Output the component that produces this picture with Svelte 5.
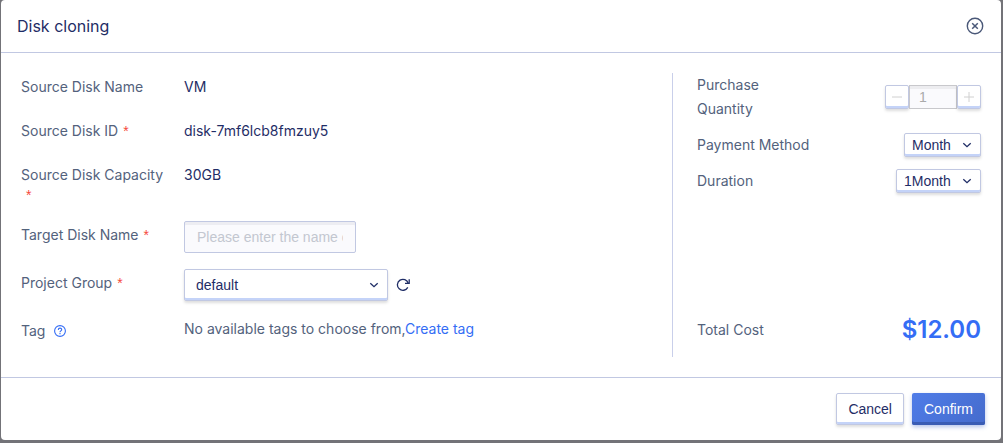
<script>
  let name = $state('');
  let group = $state('default');
  let method = $state('Month');
  let duration = $state('1Month');
  let quantity = $state(1);
</script>

{#snippet chevron()}
  <svg class="chevron" viewBox="0 0 10 10" width="10" height="10" aria-hidden="true">
    <path d="M1.3 3.2 5 6.7 8.7 3.2" fill="none" stroke="currentColor" stroke-width="1.3" />
  </svg>
{/snippet}

<div class="backdrop">
  <section class="dialog" role="dialog" aria-labelledby="title">
    <header>
      <h1 id="title">Disk cloning</h1>
      <button class="icon" aria-label="Close">
        <svg viewBox="0 0 18 18" width="18" height="18" fill="none" stroke="currentColor">
          <circle cx="9" cy="9" r="7.7" stroke-width="1.4" />
          <path d="m6.2 6.2 5.6 5.6M11.8 6.2l-5.6 5.6" stroke-width="1.5" />
        </svg>
      </button>
    </header>

    <div class="content">
      <div class="form">
        <div class="row">
          <span class="label">Source Disk Name</span>
          <span class="value">VM</span>
        </div>
        <div class="row">
          <span class="label">Source Disk ID<i>*</i></span>
          <span class="value">disk-7mf6lcb8fmzuy5</span>
        </div>
        <div class="row">
          <span class="label">Source Disk Capacity<i>*</i></span>
          <span class="value">30GB</span>
        </div>
        <div class="row">
          <label class="label" for="name">Target Disk Name<i>*</i></label>
          <input id="name" class="name" placeholder="Please enter the name of the disk" bind:value={name} />
        </div>
        <div class="row">
          <label class="label" for="group">Project Group<i>*</i></label>
          <div class="group">
            <span class="select wide">
              <select id="group" bind:value={group}><option>default</option></select>
              {@render chevron()}
            </span>
            <button class="icon" aria-label="Refresh">
              <svg viewBox="0 0 14 14" width="14" height="14" fill="none" stroke="currentColor" stroke-width="1.3">
                <path d="M11.8 9.4A5.5 5.5 0 1 1 12.2 5.2" />
                <path d="M13.2 1.2V5.4H9" />
              </svg>
            </button>
          </div>
        </div>
        <div class="row">
          <span class="label tag">
            Tag
            <svg viewBox="0 0 12 12" width="12" height="12" fill="none" stroke="currentColor" aria-hidden="true">
              <circle cx="6" cy="6" r="5.4" stroke-width="1.1" />
              <path d="M4.3 4.9C4.3 2.6 7.7 2.6 7.7 4.7 7.7 5.9 6 5.9 6 7.2M6 8v1.2" stroke-width="1.1" />
            </svg>
          </span>
          <span class="note">No available tags to choose from,<a href="#create">Create tag</a></span>
        </div>
      </div>

      <div class="order">
        <div class="item">
          <label class="caption" for="quantity">Purchase Quantity</label>
          <div class="stepper">
            <button disabled aria-label="Decrease">
              <svg viewBox="0 0 10 10" width="10" height="10"><path d="M0 5h10" stroke="currentColor" /></svg>
            </button>
            <input id="quantity" disabled value={quantity} />
            <button disabled aria-label="Increase">
              <svg viewBox="0 0 10 10" width="10" height="10"><path d="M0 5h10M5 0v10" stroke="currentColor" /></svg>
            </button>
          </div>
        </div>
        <div class="item">
          <label for="method">Payment Method</label>
          <span class="select">
            <select id="method" bind:value={method}><option>Month</option></select>
            {@render chevron()}
          </span>
        </div>
        <div class="item">
          <label for="duration">Duration</label>
          <span class="select">
            <select id="duration" bind:value={duration}><option>1Month</option></select>
            {@render chevron()}
          </span>
        </div>
        <div class="item total">
          <span>Total Cost</span>
          <strong>$12.00</strong>
        </div>
      </div>
    </div>

    <footer>
      <button class="button">Cancel</button>
      <button class="button primary">Confirm</button>
    </footer>
  </section>
</div>

<style>
  :global(body) {
    margin: 0;
    background: #737378;
  }
  .backdrop {
    padding: 0 2px 3px 1px;
    font: 14px/24px Inter, sans-serif;
    color: #53627c;
  }
  .dialog {
    background: #fff;
    border-radius: 4px;
  }
  header {
    display: flex;
    align-items: center;
    justify-content: space-between;
    height: 52px;
    padding: 0 17px 0 16px;
    border-bottom: 1px solid #c1c8e2;
  }
  h1 {
    margin: 0;
    font-size: 16px;
    font-weight: 400;
    color: #1f2d66;
  }
  button,
  input,
  select {
    box-sizing: border-box;
    margin: 0;
    font: 14px/20px "Liberation Sans", sans-serif;
    color: #1f2d66;
  }
  .icon {
    display: flex;
    padding: 0;
    border: 0;
    background: none;
    color: #1f2d66;
  }
  header .icon {
    color: #4a5878;
  }
  .content {
    display: flex;
    padding: 20px;
  }
  .form {
    flex: 1;
    min-width: 0;
    display: flex;
    flex-direction: column;
    gap: 16px;
    padding-bottom: 16px;
  }
  .row {
    display: flex;
    align-items: flex-start;
  }
  .label {
    box-sizing: border-box;
    width: 163px;
    flex: none;
    padding: 4px 20px 0 0;
    line-height: 20px;
  }
  .label i {
    display: inline-block;
    margin-left: 5px;
    font-family: "Liberation Sans", sans-serif;
    font-style: normal;
    color: #f5483b;
  }
  .value {
    line-height: 28px;
    color: #1f2d66;
  }
  .name {
    width: 172px;
    height: 32px;
    padding: 0 12px;
    border: 1px solid #c1c8e2;
    border-radius: 2px;
    background: #fafafd;
    box-shadow: inset 0 3px #ededf2;
    outline: none;
  }
  .name::placeholder {
    color: #c3c7d0;
  }
  .group {
    display: flex;
    align-items: center;
    gap: 8px;
  }
  .select {
    display: inline-grid;
    align-items: center;
  }
  .select > :global(*) {
    grid-area: 1 / 1;
  }
  select {
    appearance: none;
    height: 24px;
    padding: 0 29px 0 7px;
    border: 1px solid #c1c8e2;
    border-radius: 2px;
    background: #fff;
    box-shadow: inset 0 -2px #c4d3f8, 0 2px 3px #0002;
  }
  .wide select {
    width: 204px;
    height: 32px;
    padding-left: 11px;
  }
  .chevron {
    justify-self: end;
    margin-right: 9px;
    color: #1f2d66;
    pointer-events: none;
  }
  .tag {
    display: flex;
    align-items: center;
    gap: 9px;
  }
  .tag svg,
  a,
  strong {
    color: #346df5;
  }
  a {
    text-decoration: none;
  }
  .order {
    display: flex;
    flex-direction: column;
    gap: 12px;
    width: 284px;
    padding-left: 24px;
    border-left: 1px solid #c9cfea;
  }
  .item {
    display: flex;
    align-items: center;
    justify-content: space-between;
  }
  .caption {
    width: 80px;
  }
  .stepper {
    display: flex;
  }
  .stepper button {
    display: grid;
    place-items: center;
    width: 24px;
    height: 24px;
    padding: 0;
    border: 1px solid #c1c8e2;
    border-radius: 2px;
    background: #fff;
    box-shadow: inset 0 -2px #c4d3f8, 0 2px 3px #0002;
    color: #d0d0d0;
  }
  .stepper input {
    width: 48px;
    height: 24px;
    padding: 0 9px;
    border: 1px solid #c8c8cc;
    background: #fafafd;
    box-shadow: inset 0 3px #ededf0;
    color: #aaa;
  }
  .total {
    margin-top: auto;
    padding-bottom: 12px;
    line-height: 30px;
  }
  strong {
    font-size: 24px;
    font-weight: 600;
  }
  footer {
    display: flex;
    justify-content: flex-end;
    gap: 8px;
    padding: 15px 16px;
    border-top: 1px solid #c1c8e2;
  }
  .button {
    height: 32px;
    padding: 0 11px;
    border: 1px solid #c1c8e2;
    border-radius: 2px;
    background: #fff;
    box-shadow: inset 0 -2px #c4d3f8, 0 2px 3px #0002;
  }
  .primary {
    padding: 0 12px;
    border: 0;
    background: linear-gradient(135deg, #4f7ce8, #456bcc);
    box-shadow: inset 0 -3px #3a5cb4, 0 2px 4px #456bcc66;
    color: #fff;
  }
</style>
